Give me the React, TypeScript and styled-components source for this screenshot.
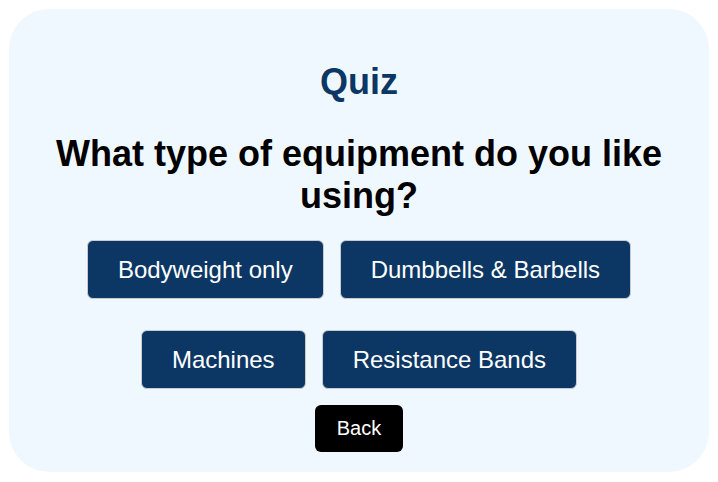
import React from "react";
import styled, { createGlobalStyle } from "styled-components";

const GlobalStyle = createGlobalStyle`
  html, body {
    margin: 0;
    padding: 0;
    background: #ffffff;
    font-family: "Liberation Sans", Arial, sans-serif;
  }
`;

const Card = styled.div`
  box-sizing: border-box;
  max-width: 700px;
  height: 463px;
  margin: 9px auto 0;
  padding: 0 20px 21px;
  background: #f0f8ff;
  border-radius: 40px;
  display: flex;
  flex-direction: column;
  align-items: center;
  text-align: center;
  & > * {
    flex-shrink: 0;
  }
`;

const Title = styled.h1`
  margin: 52px 0 0;
  font-size: 36px;
  line-height: 41px;
  font-weight: 700;
  color: #0c3764;
`;

const Question = styled.h2`
  margin: 31px 0 0;
  font-size: 36px;
  line-height: 42px;
  font-weight: 700;
  color: #000000;
`;

const Options = styled.div`
  margin-top: 23px;
  display: flex;
  flex-wrap: wrap;
  justify-content: center;
  column-gap: 16px;
  row-gap: 31px;
  max-width: 600px;
`;

const OptionButton = styled.button`
  box-sizing: border-box;
  height: 59px;
  padding: 0 30px;
  border: 1px solid #c8ccd2;
  border-radius: 6px;
  background: #0c3764;
  color: #ffffff;
  font-family: "Liberation Sans", Arial, sans-serif;
  font-size: 24px;
  line-height: 27px;
  cursor: pointer;
`;

const BackButton = styled.button`
  box-sizing: border-box;
  margin-top: 16px;
  height: 47px;
  padding: 0 22px;
  border: none;
  border-radius: 6px;
  background: #000000;
  color: #ffffff;
  font-family: "Liberation Sans", Arial, sans-serif;
  font-size: 20px;
  line-height: 23px;
  cursor: pointer;
`;

const options = ["Bodyweight only", "Dumbbells & Barbells", "Machines", "Resistance Bands"];

export default function App() {
  return (
    <>
      <GlobalStyle />
      <Card>
        <Title>Quiz</Title>
        <Question>
          What type of equipment do you like
          <br />
          using?
        </Question>
        <Options>
          {options.map((o) => (
            <OptionButton key={o}>{o}</OptionButton>
          ))}
        </Options>
        <BackButton>Back</BackButton>
      </Card>
    </>
  );
}
